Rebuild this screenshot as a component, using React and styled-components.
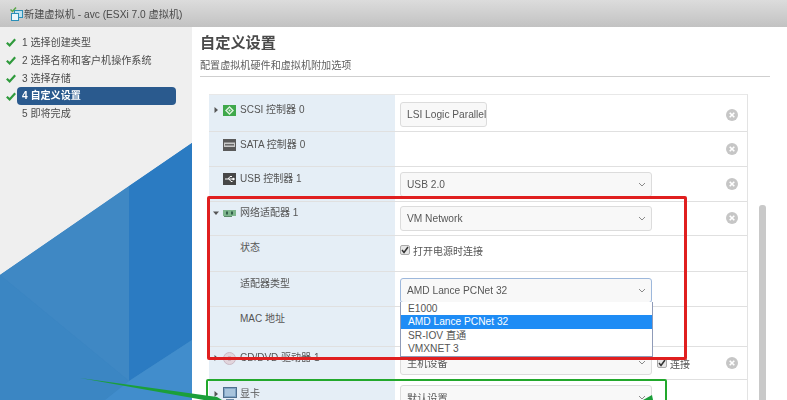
import React from "react";
import styled, { createGlobalStyle } from "styled-components";

const Global = createGlobalStyle`
  html, body { margin: 0; padding: 0; background: #fff; overflow: hidden; }
  body { font-family: "Liberation Sans", "Noto Sans CJK SC", sans-serif; color: #565656; }
`;

const Page = styled.div`
  position: relative;
  width: 787px;
  height: 400px;
  overflow: hidden;
  display: flex;
  flex-direction: column;
  filter: blur(0.35px);
`;
const TitleBar = styled.header`
  height: 27px;
  flex: none;
  display: flex;
  align-items: center;
  gap: 1px;
  padding-left: 10px;
  box-sizing: border-box;
  background: linear-gradient(#dcdcdc, #c2c2c2);
  font-size: 10.2px;
  color: #4a4a4a;
`;
const Body = styled.div`
  flex: 1;
  display: flex;
  min-height: 0;
`;
const Sidebar = styled.aside`
  position: relative;
  width: 192px;
  flex: none;
  background: #efefef;
  padding-top: 7px;
  box-sizing: border-box;
`;
const Art = styled.svg`
  position: absolute;
  left: 0;
  top: 0;
`;
const Steps = styled.ol`
  position: relative;
  list-style: none;
  margin: 0;
  padding: 0;
`;
const Step = styled.li`
  display: flex;
  align-items: center;
  height: 17.8px;
  font-size: 10.1px;
  color: #4c4c4c;
`;
const CheckSlot = styled.span`
  width: 17px;
  flex: none;
  display: flex;
  justify-content: flex-end;
  padding-right: 1px;
  box-sizing: border-box;
`;
const StepLabel = styled.span`
  flex: 0 0 159px;
  height: 18px;
  line-height: 18px;
  padding-left: 5px;
  box-sizing: border-box;
  border-radius: 4px;
  background: ${(p) => (p.$active ? "#2a5a8e" : "transparent")};
  color: ${(p) => (p.$active ? "#fff" : "inherit")};
  font-weight: ${(p) => (p.$active ? 700 : 400)};
`;
const Main = styled.main`
  flex: 1;
  padding: 6px 0 0 8px;
  min-width: 0;
  position: relative;
`;
const Heading = styled.h1`
  margin: 0;
  font-size: 15.2px;
  line-height: 20px;
  font-weight: 700;
  color: #4a4a4a;
`;
const SubHeading = styled.p`
  margin: 6px 0 0;
  font-size: 10.1px;
  line-height: 14px;
  color: #606060;
`;
const Rule = styled.div`
  height: 1px;
  background: #cfcfcf;
  margin: 3px 17px 0 0;
`;
const Table = styled.div`
  margin: 17px 0 0 9px;
  width: 538px;
  border-top: 1px solid #e8e8e8;
  border-right: 1px solid #e3e3e3;
`;
const Row = styled.div`
  display: grid;
  grid-template-columns: 186px 1fr 44px;
  height: ${(p) => p.$h}px;
  box-sizing: border-box;
  border-bottom: 1px solid #e0e0e0;
`;
const LabelCell = styled.div`
  background: #e5eef6;
  display: flex;
  align-items: flex-start;
  padding-top: ${(p) => p.$top}px;
  box-sizing: border-box;
  font-size: 10px;
  line-height: 14px;
  color: #555;
`;
const Arrow = styled.span`
  width: 14px;
  flex: none;
  display: flex;
  align-items: center;
  justify-content: center;
  height: 14px;
`;
const IconSlot = styled.span`
  width: 17px;
  flex: none;
  display: flex;
  align-items: center;
  height: 14px;
`;
const Indent = styled.span`
  width: 31px;
  flex: none;
`;
const ValueCell = styled.div`
  display: flex;
  align-items: flex-start;
  padding: ${(p) => p.$top}px 0 0 5px;
  box-sizing: border-box;
  gap: 5px;
  min-width: 0;
`;
const Select = styled.div`
  width: ${(p) => p.$w || 252}px;
  height: 25px;
  flex: none;
  box-sizing: border-box;
  border: 1px solid ${(p) => (p.$focus ? "#9db8dc" : "#dcdcdc")};
  border-radius: 3px;
  background: #f8f8f8;
  display: flex;
  align-items: center;
  justify-content: space-between;
  padding: 0 5px 0 6px;
  font-size: 10.2px;
  color: #585858;
  white-space: nowrap;
  overflow: hidden;
`;
const CheckRow = styled.label`
  display: flex;
  align-items: center;
  gap: 3px;
  font-size: 10px;
  color: #555;
  height: 16px;
  margin-top: ${(p) => p.$top || 0}px;
`;
const Box = styled.span`
  width: 10px;
  height: 10px;
  border: 1px solid #aaa;
  border-radius: 2px;
  background: #e6e6e6;
  box-sizing: border-box;
  display: flex;
  align-items: center;
  justify-content: center;
  flex: none;
`;
const ActionCell = styled.div`
  display: flex;
  justify-content: center;
  padding-top: ${(p) => p.$top}px;
  padding-left: 14px;
  box-sizing: border-box;
`;
const ScrollThumb = styled.div`
  position: absolute;
  left: 759px;
  top: 205px;
  width: 7px;
  height: 200px;
  background: #c9c9c9;
  border-radius: 3px;
`;
const Dropdown = styled.ul`
  position: absolute;
  left: 400px;
  top: 302px;
  width: 253px;
  height: 55px;
  margin: 0;
  padding: 0;
  list-style: none;
  box-sizing: border-box;
  background: #fff;
  border: 1px solid #8f9bb8;
  border-top: 0;
  font-size: 10.2px;
  color: #555;
`;
const Option = styled.li`
  height: 13.4px;
  line-height: 13px;
  padding-left: 7px;
  background: ${(p) => (p.$on ? "#1e8cf5" : "transparent")};
  color: ${(p) => (p.$on ? "#fff" : "inherit")};
`;
const Mark = styled.div`
  position: absolute;
  left: ${(p) => p.$x}px;
  top: ${(p) => p.$y}px;
  width: ${(p) => p.$w}px;
  height: ${(p) => p.$h}px;
  box-sizing: border-box;
  border: ${(p) => p.$t}px solid ${(p) => p.$c};
  border-radius: 2px;
  pointer-events: none;
`;
const Overlay = styled.svg`
  position: absolute;
  left: 0;
  top: 0;
  pointer-events: none;
`;

const Check = () => (
  <svg width="10" height="9" viewBox="0 0 10 9">
    <path d="M0.8 4.8 L3.6 7.4 L9.2 1.2" fill="none" stroke="#2f9a3c" strokeWidth="2.2" />
  </svg>
);
const Chevron = () => (
  <svg width="8" height="5" viewBox="0 0 8 5">
    <path d="M1 1 L4 4 L7 1" fill="none" stroke="#8a8a8a" strokeWidth="1" />
  </svg>
);
const Remove = () => (
  <svg width="12" height="12" viewBox="0 0 12 12">
    <circle cx="6" cy="6" r="6" fill="#c6c6c6" />
    <path d="M3.7 3.7 L8.3 8.3 M8.3 3.7 L3.7 8.3" stroke="#fff" strokeWidth="1.6" />
  </svg>
);
const Tri = ({ open }) => (
  <svg width="6" height="6" viewBox="0 0 6 6">
    <path d={open ? "M0 1.5 H6 L3 5 Z" : "M1.5 0 L5 3 L1.5 6 Z"} fill="#555" />
  </svg>
);
const VmIcon = () => (
  <svg width="13" height="14" viewBox="0 0 13 14">
    <rect x="4.5" y="3.5" width="8" height="7" fill="#bfe2ef" stroke="#2a8fb8" />
    <rect x="1.5" y="6.5" width="7" height="7" fill="#eaf6fa" stroke="#2a8fb8" />
    <path d="M0.5 2.5 L2.5 4.5 L6 0.5" fill="none" stroke="#5aa848" strokeWidth="1.5" />
  </svg>
);
const Scsi = () => (
  <svg width="13" height="11" viewBox="0 0 13 11">
    <rect width="13" height="11" fill="#3fa84b" />
    <path d="M6.5 2 L10 5.5 L6.5 9 L3 5.5 Z" fill="none" stroke="#dff2e0" strokeWidth="1.4" />
    <circle cx="6.5" cy="5.5" r="1" fill="#dff2e0" />
  </svg>
);
const Sata = () => (
  <svg width="13" height="12" viewBox="0 0 13 12">
    <rect width="13" height="12" fill="#5a5a5a" />
    <rect x="1" y="3.5" width="11" height="4.5" fill="#c9c9c9" />
    <rect x="2" y="5" width="9" height="1.5" fill="#6a6a6a" />
  </svg>
);
const Usb = () => (
  <svg width="13" height="12" viewBox="0 0 13 12">
    <rect width="13" height="12" fill="#474747" />
    <path d="M2 6 H10 M5 6 L7 3.5 H9 M6 6 L8 8.5 H9.5" stroke="#fff" fill="none" />
    <circle cx="10.5" cy="6" r="1.2" fill="#fff" />
  </svg>
);
const Nic = () => (
  <svg width="13" height="7" viewBox="0 0 13 7">
    <rect width="13" height="6" fill="#7db58c" />
    <rect x="3" y="1.5" width="2" height="3" fill="#33604a" />
    <rect x="8" y="1.5" width="2" height="3" fill="#33604a" />
    <rect x="1" y="6" width="8" height="1" fill="#5a8a68" />
  </svg>
);
const Disc = () => (
  <svg width="13" height="13" viewBox="0 0 13 13">
    <circle cx="6.5" cy="6.5" r="6" fill="#e2d5dc" stroke="#c9b7c3" />
    <circle cx="6.5" cy="6.5" r="2" fill="#fff" stroke="#bda8b5" />
  </svg>
);
const Monitor = () => (
  <svg width="14" height="14" viewBox="0 0 14 14">
    <rect x="0.5" y="0.5" width="13" height="10" fill="#7fa3c4" stroke="#4f6f8e" />
    <rect x="2" y="2" width="10" height="7" fill="#a8c4dc" />
    <rect x="3" y="12" width="8" height="2" fill="#6d8aa6" />
  </svg>
);
const BoxTick = () => (
  <Box>
    <svg width="8" height="8" viewBox="0 0 8 8">
      <path d="M1 4 L3 6.5 L7 1" fill="none" stroke="#333" strokeWidth="1.5" />
    </svg>
  </Box>
);

const steps = [
  ["1 选择创建类型", true],
  ["2 选择名称和客户机操作系统", true],
  ["3 选择存储", true],
  ["4 自定义设置", true, true],
  ["5 即将完成", false],
];

const hw = [
  { h: 37, lt: 8, st: 7, rt: 14, open: false, icon: <Scsi />, label: "SCSI 控制器 0", sel: "LSI Logic Parallel", w: 87, plain: true, rm: true },
  { h: 35, lt: 6, st: 7, rt: 11, icon: <Sata />, label: "SATA 控制器 0", rm: true },
  { h: 35, lt: 5, st: 5, rt: 11, icon: <Usb />, label: "USB 控制器 1", sel: "USB 2.0", rm: true },
  { h: 34, lt: 4, st: 4, rt: 10, open: true, icon: <Nic />, label: "网络适配器 1", sel: "VM Network", rm: true },
  { h: 36, lt: 5, st: 6, rt: 11, label: "状态", check: "打开电源时连接" },
  { h: 35, lt: 5, st: 6, rt: 11, label: "适配器类型", sel: "AMD Lance PCNet 32", focus: true },
  { h: 40, lt: 5, st: 7, rt: 11, label: "MAC 地址" },
  { h: 33, lt: 4, st: 3, rt: 10, open: false, icon: <Disc />, label: "CD/DVD 驱动器 1", sel: "主机设备", after: "连接", rm: true },
  { h: 40, lt: 7, st: 5, rt: 11, open: false, icon: <Monitor />, label: "显卡", sel: "默认设置" },
];

export default function App() {
  return (
    <Page>
      <Global />
      <TitleBar>
        <VmIcon />
        <span>新建虚拟机 - avc (ESXi 7.0 虚拟机)</span>
      </TitleBar>
      <Body>
        <Sidebar>
          <Art width="192" height="373" viewBox="0 27 192 373">
            <polygon points="0,275 192,143 192,400 0,400" fill="#3a84c1" />
            <polygon points="129,186 192,143 192,340 129,381" fill="#2b7bc2" />
            <polygon points="0,275 129,186 129,381" fill="#3f88c4" />
            <polygon points="0,275 129,381 105,400 0,400" fill="#3b86c3" />
            <polygon points="129,381 192,340 192,400 105,400" fill="#418dcc" />
          </Art>
          <Steps>
            {steps.map(([t, done, active]) => (
              <Step key={t}>
                <CheckSlot>{done && <Check />}</CheckSlot>
                <StepLabel $active={active}>{t}</StepLabel>
              </Step>
            ))}
          </Steps>
        </Sidebar>
        <Main>
          <Heading>自定义设置</Heading>
          <SubHeading>配置虚拟机硬件和虚拟机附加选项</SubHeading>
          <Rule />
          <Table>
            {hw.map((r) => (
              <Row key={r.label} $h={r.h}>
                <LabelCell $top={r.lt}>
                  {r.icon ? (
                    <>
                      <Arrow>{r.open !== undefined && <Tri open={r.open} />}</Arrow>
                      <IconSlot>{r.icon}</IconSlot>
                    </>
                  ) : (
                    <Indent />
                  )}
                  <span>{r.label}</span>
                </LabelCell>
                <ValueCell $top={r.st}>
                  {r.sel && (
                    <Select $w={r.w} $focus={r.focus}>
                      <span>{r.sel}</span>
                      {!r.plain && <Chevron />}
                    </Select>
                  )}
                  {r.check && (
                    <CheckRow>
                      <BoxTick />
                      {r.check}
                    </CheckRow>
                  )}
                  {r.after && (
                    <CheckRow $top={5}>
                      <BoxTick />
                      {r.after}
                    </CheckRow>
                  )}
                </ValueCell>
                <ActionCell $top={r.rt}>{r.rm && <Remove />}</ActionCell>
              </Row>
            ))}
          </Table>
        </Main>
      </Body>
      <ScrollThumb />
      <Dropdown>
        <Option>E1000</Option>
        <Option $on>AMD Lance PCNet 32</Option>
        <Option>SR-IOV 直通</Option>
        <Option>VMXNET 3</Option>
      </Dropdown>
      <Mark $x={207} $y={196} $w={480} $h={164} $t={3} $c="#e01f1f" />
      <Mark $x={206} $y={379} $w={461} $h={40} $t={2} $c="#22a82c" />
      <Overlay width="787" height="400">
        <polygon points="80,378 217,397 222,400 204,400" fill="#1b9f3a" />
        <polygon points="643,400 652,395 653,400" fill="#1b9f3a" />
      </Overlay>
    </Page>
  );
}
